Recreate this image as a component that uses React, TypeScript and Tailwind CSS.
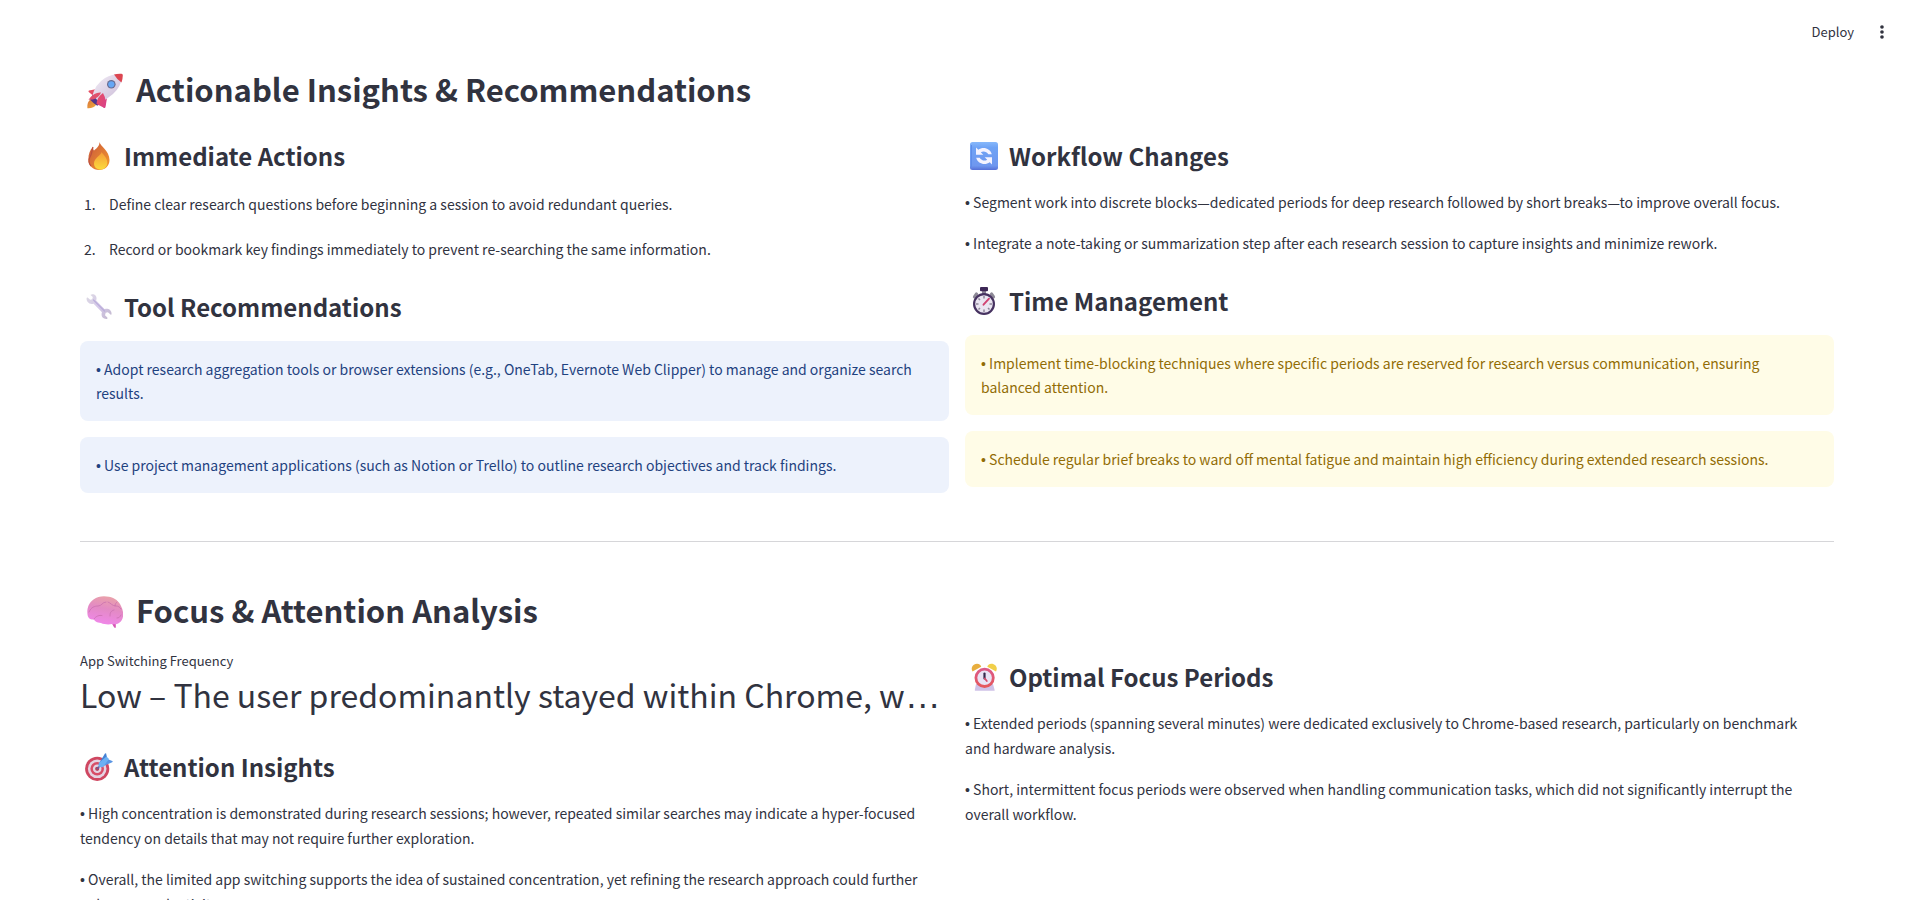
import type { ReactNode } from 'react';

interface IconProps {
  className?: string;
}

function RocketIcon({ className }: IconProps) {
  return (
    <svg viewBox="0 0 36 36" className={className} aria-hidden="true">
      <defs>
        <linearGradient id="rocket-body" x1="0" y1="0" x2="1" y2="1">
          <stop offset="0" stopColor="#f3eef7" />
          <stop offset="1" stopColor="#c9b9d6" />
        </linearGradient>
        <linearGradient id="rocket-fin" x1="0" y1="0" x2="1" y2="1">
          <stop offset="0" stopColor="#e8505f" />
          <stop offset="1" stopColor="#d8408c" />
        </linearGradient>
        <linearGradient id="rocket-flame" x1="0" y1="0" x2="1" y2="1">
          <stop offset="0" stopColor="#d9743a" />
          <stop offset="1" stopColor="#f0ad3a" />
        </linearGradient>
      </defs>
      <path d="M4 26C1 28 0 31 .4 35.3 4 35.6 8 34.5 9.5 31Z" fill="url(#rocket-flame)" />
      <path d="M10 16 2 17.500Q.7 18 2 19.200L6 22.500ZM20 25 18.500 34Q18 35.800 16.500 34.500L13.500 30Z" fill="url(#rocket-fin)" />
      <path d="M5 24Q8 11 18 5 26 .5 34 1 35.5 1 35.4 3 34 14 26 21 19 27 11.5 30.5Z" fill="url(#rocket-body)" />
      <path d="m5.5 22-2.300 4.700q3 3.500 7 6l3.300-2.300Z" fill="#51368b" />
      <path d="M14 19.500Q7 19 1.500 26.800L6 26.500Q12 24.500 14 19.500Z" fill="#e0506c" />
      <path d="M16 20Q10 24 9.500 31l8 4q3-7-1.500-15Z" fill="url(#rocket-fin)" />
      <path d="M27 1.500Q30 .5 34.500.7q1.400.1 1.300 1.500-.1 4-1.300 7.300Q30 6.500 27 1.500Z" fill="#dc4651" />
      <circle cx="24.3" cy="11.3" r="4.3" fill="#676c91" />
      <circle cx="24.3" cy="11.3" r="3.1" fill="#65a7f5" />
    </svg>
  );
}

function FireIcon({ className }: IconProps) {
  return (
    <svg viewBox="0 0 28 28" className={className} aria-hidden="true">
      <defs>
        <linearGradient id="fire-outer" x1="0" y1="0" x2="1" y2="1">
          <stop offset="0" stopColor="#c9583c" />
          <stop offset="1" stopColor="#f59a2c" />
        </linearGradient>
        <linearGradient id="fire-inner" x1="0" y1="0" x2="0" y2="1">
          <stop offset="0" stopColor="#f59b37" />
          <stop offset="1" stopColor="#fbdb3c" />
        </linearGradient>
      </defs>
      <path d="M14.5 0C15 4 24.5 8.5 24.5 18c0 6-4.500 10-10.500 10S3.400 23.500 3.400 17.500C3.400 12 5 7.500 8 5c0 1.500.3 2.500 1 3.500C12 6 14.500 4 14.500 0Z" fill="url(#fire-outer)" />
      <path d="M8 5c-1.500 4-1 7-3 10s-1 7 1 9" fill="none" stroke="#bd503e" strokeWidth="1.2" />
      <path d="M16.500 10c0 3-7.500 6-7.500 11.500 0 3.800 2.700 6 6.500 6s6.800-2.700 6.800-7c0-4.500-3.600-7.500-5.800-10.500Z" fill="url(#fire-inner)" />
    </svg>
  );
}

function WrenchIcon({ className }: IconProps) {
  return (
    <svg viewBox="0 0 28 28" className={className} aria-hidden="true">
      <defs>
        <linearGradient id="wrench" x1="0" y1="0" x2="1" y2="1">
          <stop offset="0" stopColor="#dcd9e2" />
          <stop offset=".5" stopColor="#d5c9ea" />
          <stop offset="1" stopColor="#c2b8cd" />
        </linearGradient>
      </defs>
      <path
        d="M6.500 1.400c3-.6 5.300 1.500 5 4.600-.1.900-.4 1.500-.4 1.500l8.300 8.600s1.500-.6 3-.3c2.500.4 4.300 2.600 4.200 5.200 0 .7-.7.9-1.100.5l-2.600-2.200-2.200.5-.7 2.400 2.300 2.400c.5.5.2 1.200-.5 1.300-3.300.3-5.600-2.200-5.200-5.200.1-.8.4-1.400.4-1.400L8.600 10.800s-.9.300-1.900.2C3.500 10.800 1.200 8 1.600 5.200c.1-.8.8-.9 1.300-.4l2.300 2 2-.6.600-2.200-2-1.700c-.4-.4-.1-.8.7-.9Z"
        fill="url(#wrench)"
      />
      <path d="m8.500 7 11 11" stroke="#bbaedb" strokeWidth="1.2" strokeLinecap="round" />
    </svg>
  );
}

function CycleIcon({ className }: IconProps) {
  return (
    <svg viewBox="0 0 28 28" className={className} aria-hidden="true">
      <defs>
        <linearGradient id="cycle" x1="0" y1="0" x2="0" y2="1">
          <stop offset="0" stopColor="#86b8fb" />
          <stop offset=".2" stopColor="#6fa3f5" />
          <stop offset=".85" stopColor="#6f97ef" />
          <stop offset="1" stopColor="#566fd6" />
        </linearGradient>
      </defs>
      <rect width="28" height="28" rx="2.5" fill="url(#cycle)" />
      <path d="M1.500 3v22" stroke="#5e8ce9" strokeWidth="1" />
      <path d="M6 5.500v7.300h7.300l-2.500-2.500c2.500-1.600 5.800-.9 7.500 2h3.500C20.300 6.300 13 4.200 8.300 7.800Z" fill="#f4f3ff" />
      <path d="M22 22.500v-7.300h-7.300l2.500 2.500c-2.500 1.600-5.800.9-7.500-2H6.200c1.500 6 8.800 8.100 13.500 4.500Z" fill="#f4f3ff" />
    </svg>
  );
}

function StopwatchIcon({ className }: IconProps) {
  return (
    <svg viewBox="0 0 28 28" className={className} aria-hidden="true">
      <path d="m4.500 10 2-3M23.500 10l-2-3" stroke="#8d8996" strokeWidth="3.2" strokeLinecap="round" />
      <path d="M12 4h4v4h-4Z" fill="#8b8396" />
      <rect x="10" y="0" width="8" height="4.3" rx="1" fill="#3d2756" />
      <circle cx="14" cy="17" r="9.9" fill="#eae5f1" stroke="#463260" strokeWidth="2.2" />
      <path
        d="M14 9v2.500M14 22.500V25M6 17h2.500M19.500 17H22M8.500 11.500l1.500 1.500M8.500 22.500l1.500-1.500M19.500 22.500 18 21"
        stroke="#8e8799"
        strokeWidth="1.5"
      />
      <path d="m13.500 17.700 5.500-6" stroke="#d14372" strokeWidth="1.9" strokeLinecap="round" />
    </svg>
  );
}

function BrainIcon({ className }: IconProps) {
  return (
    <svg viewBox="0 0 36 36" className={className} aria-hidden="true">
      <defs>
        <linearGradient id="brain" x1=".65" y1="0" x2=".4" y2="1">
          <stop offset="0" stopColor="#eaa3a8" />
          <stop offset=".45" stopColor="#e38ac4" />
          <stop offset="1" stopColor="#f087ea" />
        </linearGradient>
      </defs>
      <path d="M23 27c2 1.500 3 5 4.500 6.800h1.300V29Z" fill="#d556b4" />
      <path
        d="M.8 22C-.6 16 1 9.500 6.500 5.500 11 2 17 1.500 22 2.800c6 1.200 10 4.700 12 9.200 2.300 4 2.700 9 1.500 12.500-1.500 4.500-6 6.500-10.500 5.500-3 .8-8 .5-11-1-4.500-.5-6-1.500-7-3.500C4 25.500 1.800 25 .8 22Z"
        fill="url(#brain)"
      />
      <path
        d="M2 18c2-5 6-6 9-6 4 0 4-4 8-4M21 8c3 1 4 4 8 4 2 0 4 1 5 3M28 12c0-2 1-3 2-4M7 25c2-3 5-4 8-3.500M23 22c0-4 1-5 4-6M30 24c2 0 3-1 4-3"
        fill="none"
        stroke="#c86fae"
        strokeWidth="1"
        strokeLinecap="round"
        opacity=".75"
      />
    </svg>
  );
}

function TargetIcon({ className }: IconProps) {
  return (
    <svg viewBox="0 0 28 28" className={className} aria-hidden="true">
      <circle cx="12.2" cy="15.8" r="12.1" fill="#cf4761" />
      <circle cx="12.2" cy="15.8" r="9.3" fill="#e5d3e2" />
      <circle cx="12.2" cy="15.8" r="6.8" fill="#d84d67" />
      <circle cx="12.2" cy="15.8" r="4.3" fill="#e5d3e2" />
      <circle cx="12.2" cy="15.8" r="2.1" fill="#b8405b" />
      <path d="m12.500 15.500 7-7.500" stroke="#6e5c9b" strokeWidth="1.6" strokeLinecap="round" />
      <path d="m14.500 9.500 5.500-9q.9-.8 1.200.3l.8 3.700-4.500 6.500Z" fill="#4582d4" />
      <path d="m17.500 13.500 9.700-4.200q1.100-.8 0-1.300L22.500 6l-6 5.500Z" fill="#5995e3" />
      <path d="m14 9.800 7.500-6.300 2.500 2.500-6 8q-3 .6-4.200-.6Q13 12 14 9.800Z" fill="#6bb0f3" />
    </svg>
  );
}

function AlarmIcon({ className }: IconProps) {
  return (
    <svg viewBox="0 0 28 28" className={className} aria-hidden="true">
      <defs>
        <linearGradient id="alarm-ring" x1="0" y1="0" x2="0" y2="1">
          <stop offset="0" stopColor="#dc5a88" />
          <stop offset="1" stopColor="#e5575c" />
        </linearGradient>
      </defs>
      <path d="M6 21h17l1.700 6.200q0 .6-.7.600H5.300q-.7 0-.5-.7Z" fill="#cfc2e8" />
      <path d="M2.500 8.500C.3 5 3 .8 7 .8c2.400 0 4 1.500 4.200 3Z" fill="#e8ae3e" />
      <path d="M26 8.500C28.200 5 25.500.8 21.500.8c-2.400 0-4 1.500-4.200 3Z" fill="#f1cf49" />
      <circle cx="14.6" cy="14.8" r="8.7" fill="#e9e3f5" stroke="url(#alarm-ring)" strokeWidth="2.8" />
      <path d="M14.500 10.500v5" stroke="#35294d" strokeWidth="2.2" strokeLinecap="round" />
      <path d="m14.800 15.500 2 2.500" stroke="#d64a6b" strokeWidth="1.8" strokeLinecap="round" />
    </svg>
  );
}

interface HeadingProps {
  icon: React.ComponentType<IconProps>;
  children: ReactNode;
}

function SectionHeading({ icon: Icon, children }: HeadingProps) {
  return (
    <h2 className="flex items-center gap-[13px] pl-[7px] text-[31px] font-semibold">
      <Icon className="size-9 shrink-0" />
      <span className="pb-1 leading-10">{children}</span>
    </h2>
  );
}

function SubHeading({ icon: Icon, children }: HeadingProps) {
  return (
    <h3 className="flex items-center gap-[11px] pt-[11px] pl-[5px] text-[24px] leading-9 font-semibold">
      <Icon className="size-7 shrink-0" />
      <span>{children}</span>
    </h3>
  );
}

// The CJK family draws a full-width bullet, so it comes from a Latin one
function BulletText({ children }: { children: ReactNode }) {
  return (
    <p>
      <span className="font-['Liberation_Sans',sans-serif] leading-none">•</span> {children}
    </p>
  );
}

function Alert({ tone, children }: { tone: 'info' | 'warning'; children: ReactNode }) {
  const colors = tone === 'info' ? 'bg-[#edf2fc] text-[#1f4280]' : 'bg-[#fffce7] text-[#926c05]';
  return (
    <div role="alert" className={`rounded-lg p-4 leading-6 ${colors}`}>
      <BulletText>{children}</BulletText>
    </div>
  );
}

const immediateActions = [
  'Define clear research questions before beginning a session to avoid redundant queries.',
  'Record or bookmark key findings immediately to prevent re-searching the same information.'
];

const workflowChanges = [
  'Segment work into discrete blocks—dedicated periods for deep research followed by short breaks—to improve overall focus.',
  'Integrate a note-taking or summarization step after each research session to capture insights and minimize rework.'
];

const toolRecommendations = [
  'Adopt research aggregation tools or browser extensions (e.g., OneTab, Evernote Web Clipper) to manage and organize search results.',
  'Use project management applications (such as Notion or Trello) to outline research objectives and track findings.'
];

const timeManagement = [
  'Implement time-blocking techniques where specific periods are reserved for research versus communication, ensuring balanced\u00a0attention.',
  'Schedule regular brief breaks to ward off mental fatigue and maintain high efficiency during extended research sessions.'
];

const attentionInsights = [
  'High concentration is demonstrated during research sessions; however, repeated similar searches may indicate a hyper-focused tendency on details that may not require further exploration.',
  'Overall, the limited app switching supports the idea of sustained concentration, yet refining the research approach could further enhance productivity.'
];

const focusPeriods = [
  'Extended periods (spanning several minutes) were dedicated exclusively to Chrome-based research, particularly on benchmark and\u00a0hardware analysis.',
  'Short, intermittent focus periods were observed when handling communication tasks, which did not significantly interrupt the overall\u00a0workflow.'
];

export default function App() {
  return (
    <div className="h-screen overflow-y-auto bg-white font-['Noto_Sans_CJK_SC',sans-serif] text-[14px] leading-[25px] text-[#31333f] [scrollbar-width:none]">
      <header className="flex h-16 items-center justify-end gap-2 pr-5">
        <button type="button" className="px-2 text-[13px] leading-6">
          Deploy
        </button>
        <button type="button" aria-label="Main menu" className="flex size-6 items-center justify-center">
          <svg viewBox="0 0 24 24" className="size-5" fill="currentColor" aria-hidden="true">
            <circle cx="12" cy="6" r="2.2" />
            <circle cx="12" cy="12" r="2.2" />
            <circle cx="12" cy="18" r="2.2" />
          </svg>
        </button>
      </header>

      <main className="px-20 pt-[5px] pb-20">
        <section>
          <SectionHeading icon={RocketIcon}>Actionable Insights &amp; Recommendations</SectionHeading>
          <div className="mt-3.5 grid grid-cols-2 gap-4">
            <div className="flex min-w-0 flex-col gap-4">
              <SubHeading icon={FireIcon}>Immediate Actions</SubHeading>
              <ol className="flex flex-col gap-5 pt-0.5 pl-1">
                {immediateActions.map((item, index) => (
                  <li key={item} className="flex">
                    <span className="w-[25px] shrink-0">{index + 1}.</span>
                    <span>{item}</span>
                  </li>
                ))}
              </ol>
              <SubHeading icon={WrenchIcon}>Tool Recommendations</SubHeading>
              {toolRecommendations.map((item) => (
                <Alert key={item} tone="info">{item}</Alert>
              ))}
            </div>
            <div className="flex min-w-0 flex-col gap-4">
              <SubHeading icon={CycleIcon}>Workflow Changes</SubHeading>
              {workflowChanges.map((item) => (
                <BulletText key={item}>{item}</BulletText>
              ))}
              <SubHeading icon={StopwatchIcon}>Time Management</SubHeading>
              {timeManagement.map((item) => (
                <Alert key={item} tone="warning">{item}</Alert>
              ))}
            </div>
          </div>
        </section>

        <hr className="my-12 border-[#d6d6d9]" />

        <section>
          <SectionHeading icon={BrainIcon}>Focus &amp; Attention Analysis</SectionHeading>
          <div className="mt-3.5 grid grid-cols-2 gap-4">
            <div className="flex min-w-0 flex-col gap-4">
              <dl>
                <dt className="text-[13px] leading-[26px]">App Switching Frequency</dt>
                {/* The ellipsis takes the outer font, which keeps its dots on the baseline */}
                <dd className="truncate pb-1.5 font-['Liberation_Sans',sans-serif] text-[36px] leading-10">
                  <span className="font-['Noto_Sans_CJK_SC',sans-serif] text-[32px]">
                    Low – The user predominantly stayed within Chrome, while rarely opening other apps
                  </span>
                </dd>
              </dl>
              <SubHeading icon={TargetIcon}>Attention Insights</SubHeading>
              {attentionInsights.map((item) => (
                <BulletText key={item}>{item}</BulletText>
              ))}
            </div>
            <div className="flex min-w-0 flex-col gap-4">
              <SubHeading icon={AlarmIcon}>Optimal Focus Periods</SubHeading>
              {focusPeriods.map((item) => (
                <BulletText key={item}>{item}</BulletText>
              ))}
            </div>
          </div>
        </section>
      </main>
    </div>
  );
}
